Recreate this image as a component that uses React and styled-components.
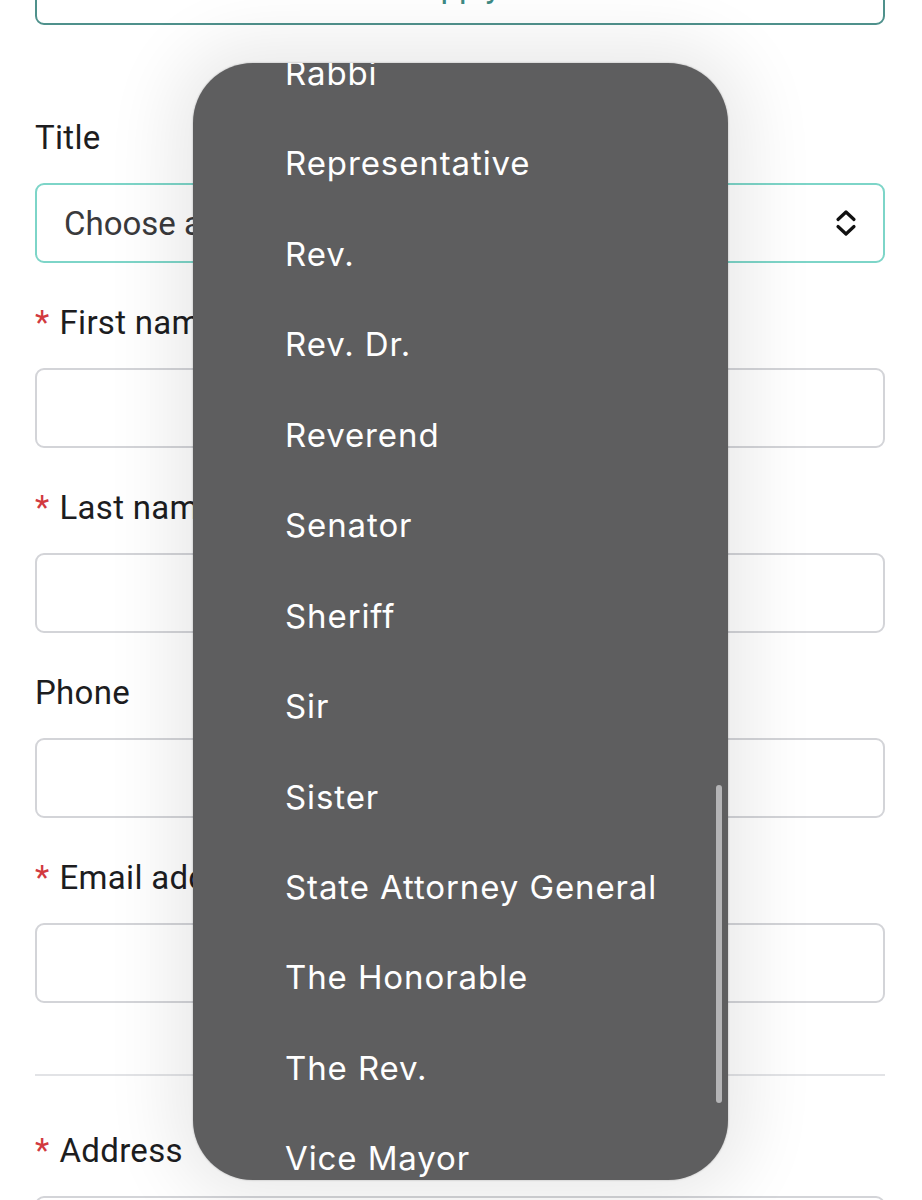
import React from "react";
import styled, { createGlobalStyle } from "styled-components";

const Global = createGlobalStyle`
  html, body { margin: 0; padding: 0; background: #ffffff; }
  body { font-family: Roboto, "Liberation Sans", Arial, sans-serif; overflow: hidden; }
  * { box-sizing: border-box; }
`;

const Page = styled.div`
  position: relative;
  width: 922px;
  height: 1200px;
  overflow: hidden;
  background: #fff;
`;

const Form = styled.div`
  display: flex;
  flex-direction: column;
  padding: 0 37px 0 35px;
  margin-top: -55px;
`;

const ApplyButton = styled.div`
  height: 80px;
  border: 2px solid #4f918c;
  border-radius: 9px;
  display: flex;
  align-items: center;
  justify-content: center;
  color: #3e8a84;
  font-size: 33px;
  margin-bottom: 91px;
`;

const Field = styled.div`
  display: flex;
  flex-direction: column;
  margin-bottom: ${(p) => p.$after ?? 38}px;
`;

const Label = styled.div`
  height: 44px;
  line-height: 44px;
  font-size: 33px;
  letter-spacing: 0.3px;
  color: #1d1d1f;
  margin-bottom: 23px;
  display: flex;
  align-items: center;
  gap: 10px;
`;

const Star = styled.span`
  color: #d23a3f;
  font-size: 33px;
`;

const Input = styled.div`
  height: 80px;
  border: 2px solid ${(p) => (p.$focus ? "#7dd5c8" : "#d3d4d8")};
  border-radius: 9px;
  display: flex;
  align-items: center;
  justify-content: space-between;
  padding: 0 26px 0 27px;
  background: #fff;
`;

const Placeholder = styled.span`
  font-size: 33px;
  color: #3a3a3c;
`;

const Rule = styled.hr`
  border: none;
  border-top: 2px solid #e2e3e6;
  margin: 71px 0 53px;
`;

const Popup = styled.div`
  position: absolute;
  top: 63px;
  left: 193px;
  width: 535px;
  height: 1117px;
  background: #5e5e5f;
  border-radius: 60px;
  overflow: hidden;
  box-shadow: 0 0 70px 20px rgba(0, 0, 0, 0.09), 0 0 2px rgba(0, 0, 0, 0.3);
`;

const List = styled.ul`
  list-style: none;
  margin: -35.2px 0 0;
  padding: 0;
`;

const Item = styled.li`
  height: 90.45px;
  display: flex;
  align-items: center;
  padding-left: 92px;
  color: #ffffff;
  font-family: Inter, "Noto Sans", "Liberation Sans", Arial, sans-serif;
  font-size: 33px;
  letter-spacing: 0.9px;
`;

const Scrollbar = styled.div`
  position: absolute;
  right: 6px;
  top: 722px;
  width: 6px;
  height: 318px;
  border-radius: 3px;
  background: #b4b4b6;
`;

const Chevrons = () => (
  <svg width="22" height="30" viewBox="0 0 22 30" fill="none">
    <path d="M3 11.5 L11 4 L19 11.5" stroke="#111" strokeWidth="3.2" strokeLinecap="round" strokeLinejoin="round" />
    <path d="M3 18.5 L11 26 L19 18.5" stroke="#111" strokeWidth="3.2" strokeLinecap="round" strokeLinejoin="round" />
  </svg>
);

const titles = [
  "Rabbi",
  "Representative",
  "Rev.",
  "Rev. Dr.",
  "Reverend",
  "Senator",
  "Sheriff",
  "Sir",
  "Sister",
  "State Attorney General",
  "The Honorable",
  "The Rev.",
  "Vice Mayor",
];

const fields = [
  { label: "First name", req: true },
  { label: "Last name", req: true },
  { label: "Phone", req: false },
  { label: "Email address", req: true, after: 0 },
];

export default function App() {
  return (
    <Page>
      <Global />
      <Form>
        <ApplyButton>Apply</ApplyButton>
        <Field>
          <Label>Title</Label>
          <Input $focus>
            <Placeholder>Choose a title</Placeholder>
            <Chevrons />
          </Input>
        </Field>
        {fields.map((f) => (
          <Field key={f.label} $after={f.after}>
            <Label>
              {f.req && <Star>*</Star>}
              {f.label}
            </Label>
            <Input />
          </Field>
        ))}
        <Rule />
        <Field>
          <Label>
            <Star>*</Star>
            Address
          </Label>
          <Input />
        </Field>
      </Form>
      <Popup>
        <List>
          {titles.map((t) => (
            <Item key={t}>{t}</Item>
          ))}
        </List>
        <Scrollbar />
      </Popup>
    </Page>
  );
}
